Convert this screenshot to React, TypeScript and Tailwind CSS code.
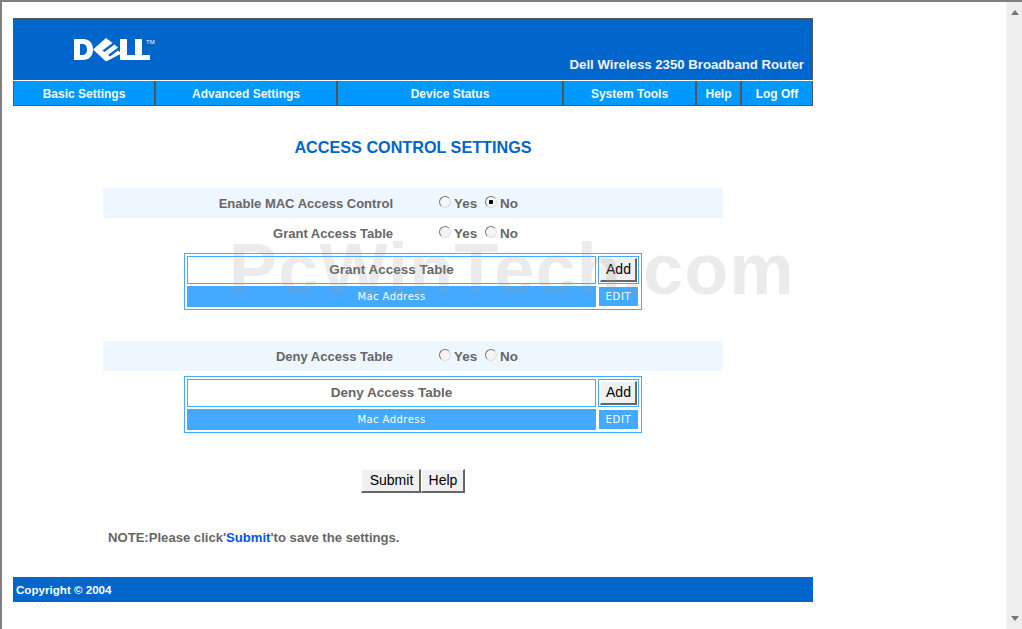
import React from 'react';

const navItems = [
  { label: 'Basic Settings', width: 'w-[142px]' },
  { label: 'Advanced Settings', width: 'w-[182px]' },
  { label: 'Device Status', width: 'w-[226px]' },
  { label: 'System Tools', width: 'w-[133px]' },
  { label: 'Help', width: 'w-[45px]' },
  { label: 'Log Off', width: 'w-[70px]' },
];

const DellLogo = () => (
  <svg width="84" height="24" viewBox="0 0 84 24" className="block" aria-label="Dell logo">
    <g fill="#fff">
      <path fillRule="evenodd" d="M0 1h9c6 0 10 4 10 10.5S15 22 9 22H0zM6 6v11h2.5c3 0 4.500-2.200 4.500-5.500S11.500 6 8.500 6z" />
      <path d="M19 11.5 32 0l6.500 5-10 7.500 2 1.500 10-7.500 3.500 3-10 7.500 2 1.500 8-6 3.500 3L32 23.500z" />
      <path d="M46 1h7v16h8v5H46z" />
      <path d="M61 1h7v16h8v5H61z" />
    </g>
    <text x="72" y="6" fill="#fff" fontSize="6" fontFamily="Liberation Sans, sans-serif">TM</text>
  </svg>
);

const Radio = ({ label, checked = false }: { label: string; checked?: boolean }) => (
  <label className="flex items-center">
    <input
      type="radio"
      readOnly
      checked={checked}
      className={`appearance-none w-3 h-3 -mt-[2px] rounded-full border border-t-[#777] border-l-[#777] border-r-[#ddd] border-b-[#ddd] ${
        checked ? 'bg-[radial-gradient(circle,#000_2px,#f4f4f4_2.5px)]' : 'bg-[#f4f4f4]'
      }`}
    />
    <span className="ml-[3px] mt-[2px] text-[13.4px] font-bold text-[#666]">{label}</span>
  </label>
);

const SettingRow = ({ label, noChecked = false, shaded = false }: { label: string; noChecked?: boolean; shaded?: boolean }) => (
  <div className={`w-[620px] h-[30px] ml-[90px] flex items-center ${shaded ? 'bg-[#eef7ff]' : ''}`}>
    <div className="w-[290px] pt-[1px] text-right text-[13px] font-bold text-[#666]">{label}</div>
    <div className="ml-[46px] flex items-center gap-[8px]">
      <Radio label="Yes" />
      <Radio label="No" checked={noChecked} />
    </div>
  </div>
);

const ClassicButton = ({ label, className }: { label: string; className: string }) => (
  <button
    type="button"
    className={`bg-[#f0f0f0] text-[14px] text-black border border-t-[#fff] border-l-[#fff] border-r-[#666] border-b-[#666] border-b-2 border-r-2 ${className}`}
  >
    {label}
  </button>
);

const AccessTable = ({ title, className }: { title: string; className: string }) => (
  <div className={`w-[458px] h-[57px] ml-[171px] border border-[#44aaff] p-[2px] flex flex-col gap-[2px] ${className}`}>
    <div className="flex gap-[2px] h-[28px]">
      <div className="w-[409px] pt-[1px] border border-[#44aaff] flex items-center justify-center text-[13.5px] font-bold text-[#666]">
        {title}
      </div>
      <div className="w-[41px] border border-[#44aaff] p-[1px] flex">
        <ClassicButton label="Add" className="w-full pl-[1px]" />
      </div>
    </div>
    <div className="flex gap-[2px] h-[21px]">
      <div className="w-[409px] bg-[#44aaff] flex items-center justify-center text-[10px] tracking-[0.45px] font-['DejaVu_Sans',sans-serif] text-white">
        Mac Address
      </div>
      <div className="w-[41px] flex justify-center">
        <div className="w-[39px] h-[19px] mt-[1px] bg-[#44aaff] flex items-center justify-center text-[10px] tracking-[0.7px] font-['DejaVu_Sans',sans-serif] text-white">
          EDIT
        </div>
      </div>
    </div>
  </div>
);

export default function App() {
  return (
    <div className="relative w-[1022px] h-[629px] overflow-hidden bg-white border-t-2 border-l-2 border-[#808080] flex font-['Liberation_Sans',Arial,sans-serif]">
      <main className="w-[1004px] pl-[11px] pt-[16px]">
        <div className="w-[800px] h-[62px] bg-[#0066cc] border border-[#555] relative">
          <div className="absolute left-[60px] top-[19px]">
            <DellLogo />
          </div>
          <div className="absolute right-[8px] bottom-[4px] text-[13.2px] font-bold text-[#f0f4ff]">
            Dell Wireless 2350 Broadband Router
          </div>
        </div>

        <nav className="w-[800px] h-[25px] mt-[1px] flex bg-[#0099ff] border-b border-l border-r border-[#555]">
          {navItems.map((item, i) => (
            <div
              key={item.label}
              className={`${item.width} shrink-0 pt-[1px] flex items-center justify-center text-[12px] font-bold text-[#f4f8ff] ${
                i < navItems.length - 1 ? 'border-r-2 border-[#555]' : ''
              }`}
            >
              {item.label}
            </div>
          ))}
        </nav>

        <h1 className="w-[800px] mt-[31px] text-center text-[16.2px] leading-[20px] font-bold text-[#0066cc]">
          ACCESS CONTROL SETTINGS
        </h1>

        <div className="mt-[31px]">
          <SettingRow label="Enable MAC Access Control" noChecked shaded />
          <SettingRow label="Grant Access Table" />
          <AccessTable title="Grant Access Table" className="mt-[5px]" />
        </div>

        <div className="mt-[31px]">
          <SettingRow label="Deny Access Table" shaded />
          <AccessTable title="Deny Access Table" className="mt-[5px]" />
        </div>

        <div className="mt-[36px] ml-[348px] flex h-[24px]">
          <ClassicButton label="Submit" className="w-[60px] pl-[2px]" />
          <ClassicButton label="Help" className="w-[44px] pl-[1px]" />
        </div>

        <p className="mt-[37px] ml-[95px] text-[13.1px] leading-[16px] font-bold text-[#666]">
          NOTE:Please click'<span className="text-[#0055ee]">Submit</span>'to save the settings.
        </p>

        <footer className="w-[800px] h-[25px] mt-[31px] bg-[#0066cc] flex items-center pl-[3px] text-[11.6px] font-bold text-white">
          Copyright © 2004
        </footer>
      </main>

      <aside className="w-[16px] h-full bg-[#eeeeee] border-l border-[#f6f6f6] flex flex-col items-center justify-between py-[8px]">
        <svg width="8" height="5" viewBox="0 0 8 5"><path d="M4 0 8 5H0z" fill="#777" /></svg>
        <svg width="8" height="5" viewBox="0 0 8 5"><path d="M4 5 0 0h8z" fill="#777" /></svg>
      </aside>

      <div className="absolute left-[227px] top-[228px] text-[72px] tracking-[1.2px] leading-[78px] font-bold text-[#999]/20 pointer-events-none whitespace-nowrap">
        PcWinTech.com
      </div>
    </div>
  );
}
